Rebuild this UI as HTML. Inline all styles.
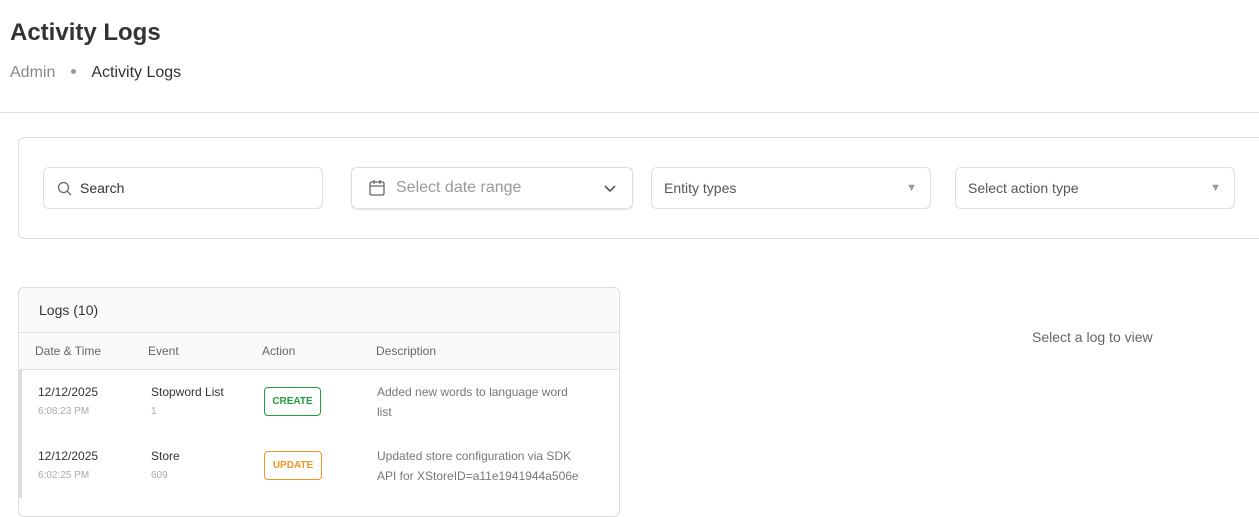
<!DOCTYPE html>
<html><head><style>
*{box-sizing:border-box;margin:0;padding:0}
body{width:1259px;height:504px;overflow:hidden;background:#fff;font-family:"Liberation Sans",sans-serif;color:#333;position:relative}
.abs{position:absolute}
h1{position:absolute;left:10px;top:19px;font-size:24px;font-weight:bold;color:#333}
.bc{position:absolute;left:10px;top:64px;font-size:16px;color:#888}
.bc b{font-weight:normal;color:#333}
.bc i{display:inline-block;width:5px;height:5px;border-radius:50%;background:#999;margin:0 15px 3px 16px}
.hr{left:0;top:112px;width:1259px;height:1px;background:#ddd}
.filt{left:18px;top:137px;width:1260px;height:102px;border:1px solid #ddd;border-radius:6px}
.inp{position:absolute;top:167px;height:42px;border:1px solid #ddd;border-radius:6px;font-size:14px;color:#555;padding:0 12px;line-height:40px}
.card{left:18px;top:287px;width:602px;height:230px;border:1px solid #ddd;border-radius:6px;overflow:hidden}
.ch{height:45px;background:#fafafa;border-bottom:1px solid #e2e2e2;font-size:14px;padding:14px 20px;color:#333}
.th{height:37px;background:#fafafa;border-bottom:1px solid #e2e2e2;position:relative;font-size:12px;color:#666}
.th span{position:absolute;top:11px}
.row{position:relative;height:64px;border-left:3px solid #ddd;font-size:12px}
.row span{position:absolute}
.sub{color:#aaa;font-size:10px}
.badge{position:absolute;border:1px solid;border-radius:4px;font-size:10px;font-weight:bold;text-align:center;line-height:27px;height:29px}
</style></head><body>
<h1>Activity Logs</h1>
<div class="bc">Admin<i></i><b>Activity Logs</b></div>
<div class="abs hr"></div>
<div class="abs filt"></div>
<div class="inp" style="left:43px;width:280px;padding-left:36px;color:#333">Search
<svg class="abs" style="left:13px;top:13px" width="15" height="15" viewBox="0 0 15 15" fill="none" stroke="#666" stroke-width="1.3"><circle cx="6.5" cy="6.5" r="5"/><path d="M10.2 10.2L14 14"/></svg></div>
<div class="inp" style="left:351px;width:282px;padding-left:44px;font-size:16px;color:#999;box-shadow:0 1px 2px rgba(0,0,0,.1)">Select date range
<svg class="abs" style="left:17px;top:11px" width="16" height="17" viewBox="0 0 16 17" fill="none" stroke="#666" stroke-width="1.3"><rect x="1" y="3" width="14" height="13" rx="1.5"/><path d="M1 7h14M5 1v4M11 1v4"/></svg>
<svg class="abs" style="left:252px;top:17px" width="12" height="8" viewBox="0 0 12 8" fill="none" stroke="#444" stroke-width="1.5"><path d="M1 1l5 5 5-5"/></svg></div>
<div class="inp" style="left:651px;width:280px">Entity types<span class="abs" style="right:13px;top:0;color:#999;font-size:11px">▼</span></div>
<div class="inp" style="left:955px;width:280px">Select action type<span class="abs" style="right:13px;top:0;color:#999;font-size:11px">▼</span></div>
<div class="abs card">
<div class="ch">Logs (10)</div>
<div class="th"><span style="left:16px">Date &amp; Time</span><span style="left:129px">Event</span><span style="left:243px">Action</span><span style="left:357px">Description</span></div>
<div class="row"><span style="left:16px;top:15px">12/12/2025</span><span class="sub" style="left:16px;top:36px">6:08:23 PM</span>
<span style="left:129px;top:15px">Stopword List</span><span class="sub" style="left:129px;top:36px">1</span>
<div class="badge" style="left:242px;top:17px;width:57px;color:#1f9e3a;border-color:#1f9e3a">CREATE</div>
<span style="left:355px;top:12px;color:#777;line-height:20px;width:205px">Added new words to language word list</span></div>
<div class="row"><span style="left:16px;top:15px">12/12/2025</span><span class="sub" style="left:16px;top:36px">6:02:25 PM</span>
<span style="left:129px;top:15px">Store</span><span class="sub" style="left:129px;top:36px">609</span>
<div class="badge" style="left:242px;top:17px;width:58px;color:#f0961e;border-color:#f0961e">UPDATE</div>
<span style="left:355px;top:12px;color:#777;line-height:20px;width:212px">Updated store configuration via SDK API for XStoreID=a11e1941944a506e</span></div>
</div>
<div class="abs" style="left:1032px;top:329px;font-size:14px;color:#666">Select a log to view</div>
</body></html>
